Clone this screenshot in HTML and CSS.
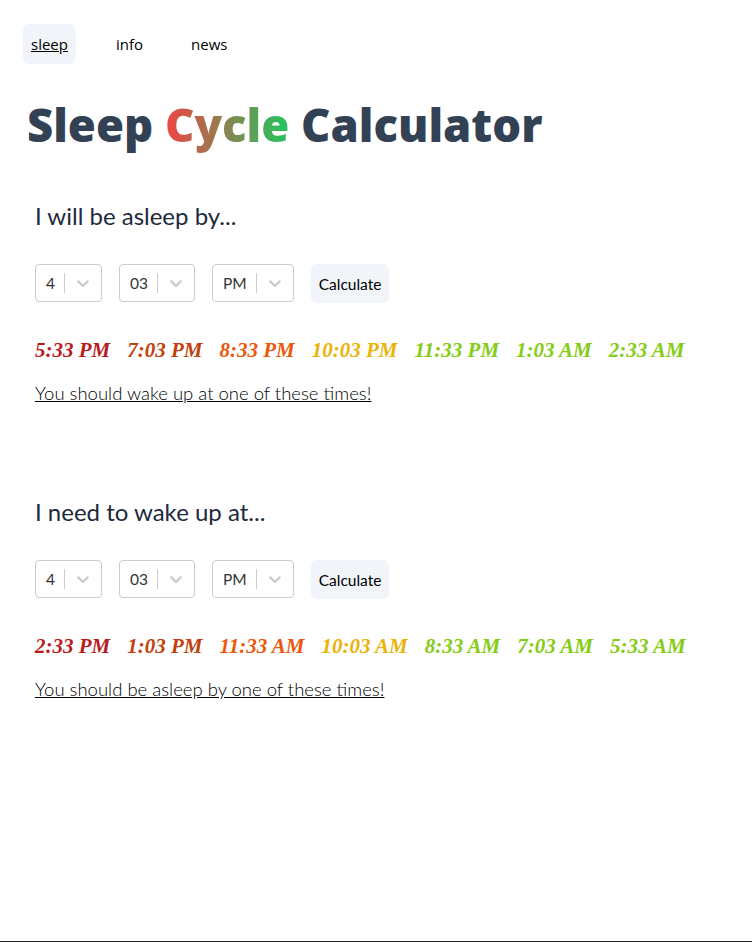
FILE: index.html
```html
<!DOCTYPE html>
<html lang="en">
<head>
<meta charset="utf-8">
<title>Sleep Cycle Calculator</title>
<link rel="stylesheet" href="styles.css">
</head>
<body>
<div class="page">
  <nav class="nav">
    <a class="nav-btn active">sleep</a>
    <a class="nav-btn">info</a>
    <a class="nav-btn">news</a>
  </nav>
  <h1 class="title">Sleep <span class="grad">Cycle</span> Calculator</h1>

  <section class="calc">
    <h2 class="calc-heading">I will be asleep by...</h2>
    <div class="controls">
      <div class="select"><span class="sel-value">4</span><span class="sel-sep"></span><span class="sel-ind"><svg viewBox="0 0 20 20" width="20" height="20"><path d="M4.516 7.548c0.436-0.446 1.043-0.481 1.576 0l3.908 3.747 3.908-3.747c0.533-0.481 1.141-0.446 1.574 0 0.436 0.445 0.408 1.197 0 1.615-0.406 0.418-4.695 4.502-4.695 4.502-0.217 0.223-0.502 0.335-0.787 0.335s-0.57-0.112-0.789-0.335c0 0-4.287-4.084-4.695-4.502s-0.436-1.17 0-1.615z"/></svg></span></div>
      <div class="select"><span class="sel-value">03</span><span class="sel-sep"></span><span class="sel-ind"><svg viewBox="0 0 20 20" width="20" height="20"><path d="M4.516 7.548c0.436-0.446 1.043-0.481 1.576 0l3.908 3.747 3.908-3.747c0.533-0.481 1.141-0.446 1.574 0 0.436 0.445 0.408 1.197 0 1.615-0.406 0.418-4.695 4.502-4.695 4.502-0.217 0.223-0.502 0.335-0.787 0.335s-0.57-0.112-0.789-0.335c0 0-4.287-4.084-4.695-4.502s-0.436-1.17 0-1.615z"/></svg></span></div>
      <div class="select"><span class="sel-value">PM</span><span class="sel-sep"></span><span class="sel-ind"><svg viewBox="0 0 20 20" width="20" height="20"><path d="M4.516 7.548c0.436-0.446 1.043-0.481 1.576 0l3.908 3.747 3.908-3.747c0.533-0.481 1.141-0.446 1.574 0 0.436 0.445 0.408 1.197 0 1.615-0.406 0.418-4.695 4.502-4.695 4.502-0.217 0.223-0.502 0.335-0.787 0.335s-0.57-0.112-0.789-0.335c0 0-4.287-4.084-4.695-4.502s-0.436-1.17 0-1.615z"/></svg></span></div>
      <button class="calc-btn">Calculate</button>
    </div>
    <div class="times">
      <span class="t c1">5:33 PM</span>
      <span class="t c2">7:03 PM</span>
      <span class="t c3">8:33 PM</span>
      <span class="t c4">10:03 PM</span>
      <span class="t c5">11:33 PM</span>
      <span class="t c6">1:03 AM</span>
      <span class="t c7">2:33 AM</span>
    </div>
    <p class="note">You should wake up at one of these times!</p>
  </section>

  <section class="calc second">
    <h2 class="calc-heading">I need to wake up at...</h2>
    <div class="controls">
      <div class="select"><span class="sel-value">4</span><span class="sel-sep"></span><span class="sel-ind"><svg viewBox="0 0 20 20" width="20" height="20"><path d="M4.516 7.548c0.436-0.446 1.043-0.481 1.576 0l3.908 3.747 3.908-3.747c0.533-0.481 1.141-0.446 1.574 0 0.436 0.445 0.408 1.197 0 1.615-0.406 0.418-4.695 4.502-4.695 4.502-0.217 0.223-0.502 0.335-0.787 0.335s-0.57-0.112-0.789-0.335c0 0-4.287-4.084-4.695-4.502s-0.436-1.17 0-1.615z"/></svg></span></div>
      <div class="select"><span class="sel-value">03</span><span class="sel-sep"></span><span class="sel-ind"><svg viewBox="0 0 20 20" width="20" height="20"><path d="M4.516 7.548c0.436-0.446 1.043-0.481 1.576 0l3.908 3.747 3.908-3.747c0.533-0.481 1.141-0.446 1.574 0 0.436 0.445 0.408 1.197 0 1.615-0.406 0.418-4.695 4.502-4.695 4.502-0.217 0.223-0.502 0.335-0.787 0.335s-0.57-0.112-0.789-0.335c0 0-4.287-4.084-4.695-4.502s-0.436-1.17 0-1.615z"/></svg></span></div>
      <div class="select"><span class="sel-value">PM</span><span class="sel-sep"></span><span class="sel-ind"><svg viewBox="0 0 20 20" width="20" height="20"><path d="M4.516 7.548c0.436-0.446 1.043-0.481 1.576 0l3.908 3.747 3.908-3.747c0.533-0.481 1.141-0.446 1.574 0 0.436 0.445 0.408 1.197 0 1.615-0.406 0.418-4.695 4.502-4.695 4.502-0.217 0.223-0.502 0.335-0.787 0.335s-0.57-0.112-0.789-0.335c0 0-4.287-4.084-4.695-4.502s-0.436-1.17 0-1.615z"/></svg></span></div>
      <button class="calc-btn">Calculate</button>
    </div>
    <div class="times">
      <span class="t c1">2:33 PM</span>
      <span class="t c2">1:03 PM</span>
      <span class="t c3">11:33 AM</span>
      <span class="t c4">10:03 AM</span>
      <span class="t c5">8:33 AM</span>
      <span class="t c6">7:03 AM</span>
      <span class="t c7">5:33 AM</span>
    </div>
    <p class="note">You should be asleep by one of these times!</p>
  </section>
</div>
</body>
</html>
```

FILE: styles.css
```css
* { box-sizing: border-box; }
html, body { margin: 0; padding: 0; }
body {
  min-height: 100vh;
  border-bottom: 1px solid #222;
  background: #fff;
  font-family: "Lato", "Open Sans", sans-serif;
  color: #000;
}
.page { padding: 24px 23px; }

.nav { display: flex; gap: 32px; }
.nav-btn {
  display: block;
  padding: 8px;
  font-family: "Open Sans", sans-serif;
  font-size: 15px;
  line-height: 24px;
  border-radius: 6px;
  color: #000;
}
.nav-btn.active { background: #f1f5f9; text-decoration: underline; }

.title {
  margin: 30px 0 0 4px;
  font-family: "Open Sans", sans-serif;
  font-weight: 800;
  font-size: 45.4px;
  line-height: 60px;
  color: #334155;
}
.grad {
  background: linear-gradient(90deg, #ef4444, #22c55e);
  -webkit-background-clip: text;
  background-clip: text;
  color: transparent;
}

.calc { padding: 0 12px; margin-top: 46px; }
.calc.second { margin-top: 91px; }
.calc-heading {
  margin: 0;
  font-weight: 400;
  font-size: 24px;
  line-height: 32px;
  color: #1e293b;
}
.controls { display: flex; gap: 17px; margin-top: 32px; align-items: flex-start; }
.select {
  display: flex;
  align-items: center;
  height: 38px;
  border: 1px solid #ccc;
  border-radius: 4px;
  background: #fff;
}
.sel-value {
  padding: 2px 9px 2px 10px;
  font-size: 15.5px;
  color: #333;
}
.sel-sep { width: 1px; align-self: stretch; margin: 8px 0; background: #ccc; }
.sel-ind { display: flex; padding: 8px; }
.sel-ind svg { fill: #ccc; }
.calc-btn {
  height: 39px;
  padding: 0 8px;
  border: 0;
  border-radius: 6px;
  background: #f1f5f9;
  font-family: inherit;
  font-size: 15.5px;
  color: #000;
}

.times { display: flex; gap: 17px; margin-top: 35px; }
.t {
  font-family: "Liberation Serif", serif;
  font-weight: 700;
  font-style: italic;
  font-size: 21px;
  line-height: 24px;
}
.c1 { color: #b91c1c; }
.c2 { color: #c2410c; }
.c3 { color: #ea580c; }
.c4 { color: #eab308; }
.c5 { color: #84cc16; }
.c6 { color: #84cc16; }
.c7 { color: #84cc16; }

.note {
  margin: 19px 0 0;
  font-size: 18.5px;
  line-height: 24px;
  text-decoration: underline;
  font-weight: 300;
  color: #000;
}
```
